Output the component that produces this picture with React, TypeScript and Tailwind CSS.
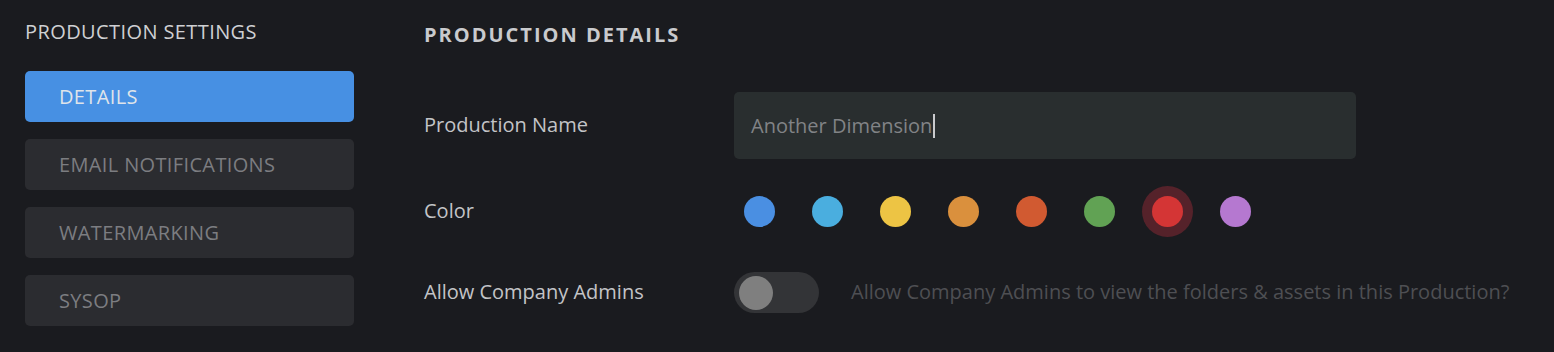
import { useState } from "react";

const NAV = ["DETAILS", "EMAIL NOTIFICATIONS", "WATERMARKING", "SYSOP"];

const COLORS = [
  "bg-[#4a8fe2]",
  "bg-[#4aaedf]",
  "bg-[#edc444]",
  "bg-[#da903d]",
  "bg-[#d15a31]",
  "bg-[#61a254]",
  "bg-[#d43535]",
  "bg-[#b578d0]",
];

export default function App() {
  const [active, setActive] = useState(0);
  const [color, setColor] = useState(6);

  return (
    <div className="flex h-screen bg-[#1a1b1f] pl-[25px] font-['Open_Sans',sans-serif]">
      <aside className="w-[329px] shrink-0 pt-[22px]">
        <h2 className="text-[20px] font-medium leading-[20px] tracking-[0.02em] text-[#cfd0d3]">
          PRODUCTION SETTINGS
        </h2>
        <nav className="mt-[29px] flex flex-col gap-[17px]">
          {NAV.map((n, i) => (
            <button
              key={n}
              onClick={() => setActive(i)}
              className={
                "flex h-[51px] items-center rounded-[5px] pl-[34px] text-left text-[20px] tracking-[0.018em] " +
                (i === active
                  ? "bg-[#4790e3] text-[#dfe4ea]"
                  : "bg-[#2b2c30] text-[#7c7d81]")
              }
            >
              {n}
            </button>
          ))}
        </nav>
      </aside>

      <main className="ml-[70px] flex-1 pt-[25px]">
        <h1 className="text-[20px] font-bold leading-[20px] tracking-[0.1em] text-[#c9cacd]">
          PRODUCTION DETAILS
        </h1>

        <div className="mt-[47px] flex items-center">
          <label className="w-[310px] pb-[1px] text-[20px] font-medium text-[#c3c4c7]">Production Name</label>
          <div className="flex h-[67px] w-[622px] items-center rounded-[5px] bg-[#292e2f] px-[17px] text-[20px] text-[#818386]">
            Another Dimension
            <span className="ml-[1px] h-[24px] w-[2px] bg-[#c9cacd]" />
          </div>
        </div>

        <div className="mt-[27px] flex items-center">
          <label className="w-[310px] pb-[1px] text-[20px] font-medium text-[#c3c4c7]">Color</label>
          <div className="flex items-center gap-[17px]">
            {COLORS.map((c, i) => (
              <button
                key={c}
                onClick={() => setColor(i)}
                className={
                  "flex h-[51px] w-[51px] items-center justify-center rounded-full " +
                  (i === color ? "bg-[#55222a]" : "")
                }
              >
                <span className={"h-[31px] w-[31px] rounded-full " + c} />
              </button>
            ))}
          </div>
        </div>

        <div className="mt-[35px] flex items-center">
          <label className="w-[310px] pb-[2px] text-[20px] font-medium text-[#c3c4c7]">Allow Company Admins</label>
          <div className="flex h-[41px] w-[85px] items-center rounded-full bg-[#333437] pl-[5px]">
            <span className="h-[34px] w-[34px] rounded-full bg-[#7f7f7f]" />
          </div>
          <span className="ml-[32px] pb-[2px] text-[20px] text-[#4e4f53]">
            Allow Company Admins to view the folders &amp; assets in this Production?
          </span>
        </div>
      </main>
    </div>
  );
}
